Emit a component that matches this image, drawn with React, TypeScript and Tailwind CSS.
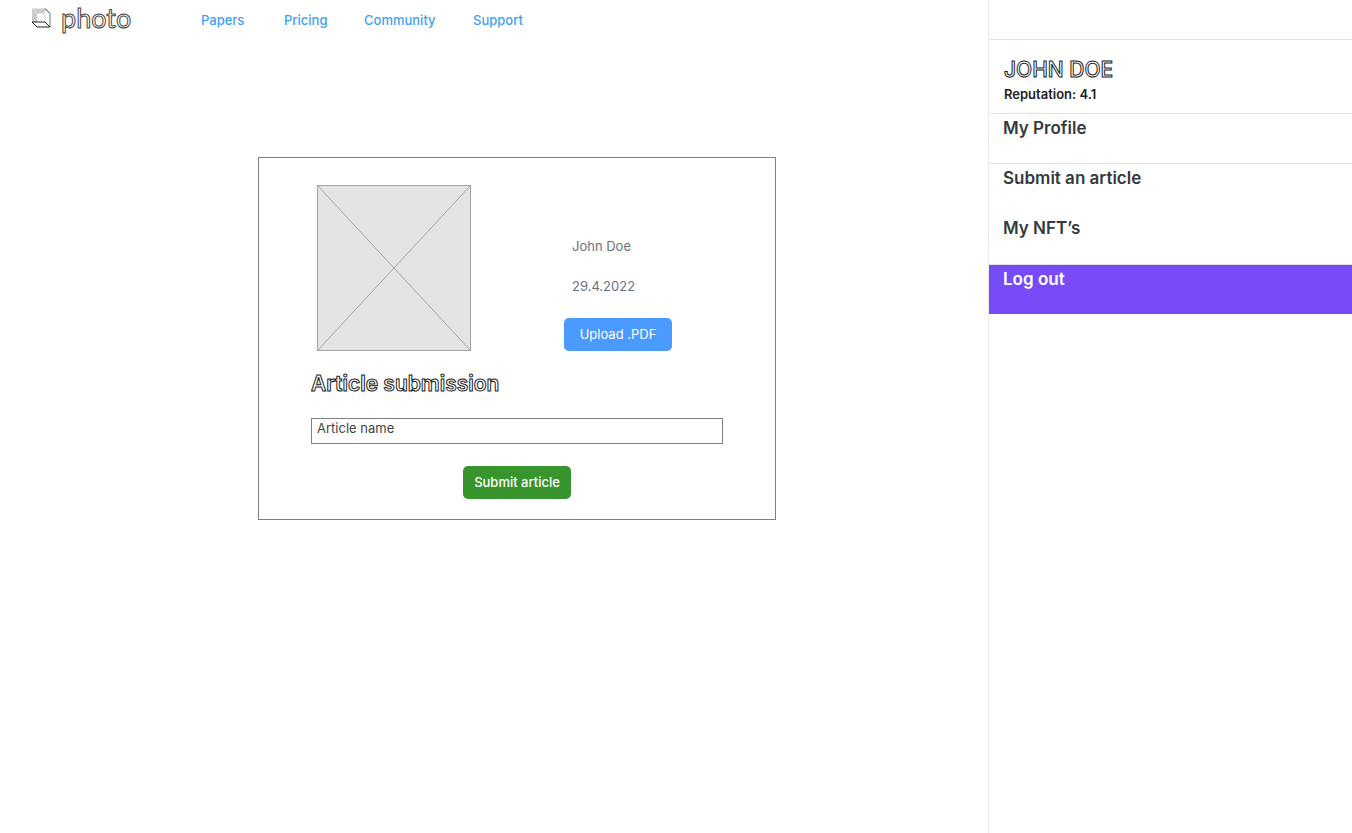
import React from "react";

const navLinks = [
  { label: "Papers", width: "w-[83px]" },
  { label: "Pricing", width: "w-20" },
  { label: "Community", width: "w-[109px]" },
  { label: "Support", width: "w-16" },
];

const menuItems = [
  { label: "My Profile", href: "#profile", style: "h-[50px] border-t border-[#e2e2e2]" },
  { label: "Submit an article", href: "#submit", style: "h-[51px] border-t border-[#e2e2e2]" },
  { label: "My NFT’s", href: "#nfts", style: "h-[51px] border-b border-[#e2e2e2]" },
  { label: "Log out", href: "#logout", style: "h-[49px] bg-[#784bf9] text-white" },
];

function Logo() {
  return (
    <a href="#home" className="flex w-[170px] items-center gap-2.5 pb-1">
      <svg width="20" height="20" viewBox="0 0 20 20" fill="none" aria-hidden="true">
        <path d="M1 0.5H14.5L13.5 5.5H6V14H1Z" fill="#cbcbcb" />
        <path d="M1 0.5L6 5.5" stroke="#e4e4e4" />
        <path d="M14 5.5V14" stroke="#d4d4d4" />
        <path d="M14 0.5L19 5.5" stroke="#222" />
        <path d="M19 5.5V19" stroke="#777" />
        <path d="M1 14H14L19 19H6L1 14Z" stroke="#222" />
      </svg>
      <span className="font-['Lato',sans-serif] text-[27px] leading-8 font-normal text-white [-webkit-text-stroke:1px_#444]">
        photo
      </span>
    </a>
  );
}

function Header() {
  return (
    <header className="flex h-10 items-center pl-[31px]">
      <Logo />
      <nav className="flex text-[13px] leading-5 font-medium text-[#3f9ff5]">
        {navLinks.map((link) => (
          <div key={link.label} className={link.width}>
            <a href={"#" + link.label.toLowerCase()}>{link.label}</a>
          </div>
        ))}
      </nav>
    </header>
  );
}

function ImagePlaceholder() {
  return (
    <svg
      className="block h-[166px] w-[154px] bg-[#e4e4e4]"
      viewBox="0 0 154 166"
      fill="none"
      stroke="#a3a3a3"
      role="img"
      aria-label="Article cover"
    >
      <rect x="0.5" y="0.5" width="153" height="165" />
      <path d="M0.5 0.5L153.5 165.5M153.5 0.5L0.5 165.5" />
    </svg>
  );
}

function SubmissionCard() {
  return (
    <form
      className="w-[518px] border border-[#808080] px-[52px] pt-[27px] pb-5"
      onSubmit={(event) => event.preventDefault()}
    >
      <div className="flex items-end justify-between pr-[51px] pl-1.5">
        <ImagePlaceholder />
        <div className="w-[108px]">
          <p className="pl-2 text-[13px] leading-5 text-[#6b7280]">John Doe</p>
          <p className="mt-5 pl-2 text-[13px] leading-5 text-[#6b7280]">29.4.2022</p>
          <button
            type="button"
            className="mt-[22px] block h-[33px] w-full rounded-[5px] bg-[#4a9aff] text-[13px] text-white"
          >
            Upload .PDF
          </button>
        </div>
      </div>
      <h1 className="mt-[19px] text-[21px] leading-7 font-semibold text-white [-webkit-text-stroke:1px_#222]">
        Article submission
      </h1>
      <input
        type="text"
        aria-label="Article name"
        placeholder="Article name"
        className="mt-5 block h-[26px] w-full border border-[#808080] px-[5px] pb-1.5 text-[13px] text-[#444] outline-none placeholder:text-[#444]"
      />
      <button
        type="submit"
        className="mx-auto mt-[22px] block h-[33px] w-[108px] rounded-[5px] bg-[#38942c] text-[13px] font-medium text-white"
      >
        Submit article
      </button>
    </form>
  );
}

function Sidebar() {
  return (
    <aside className="w-[364px] shrink-0 border-l border-[#ececec] pt-[39px] text-[#343a40]">
      <div className="h-[74px] border-t border-[#e2e2e2] pt-4 pl-[15px]">
        <h2 className="text-[21px] leading-7 font-medium text-white [-webkit-text-stroke:1px_#222]">
          JOHN DOE
        </h2>
        <p className="text-[13px] leading-5 font-semibold text-[#222]">Reputation: 4.1</p>
      </div>
      <nav className="text-[17px] leading-7 font-semibold">
        {menuItems.map((item) => (
          <a key={item.label} href={item.href} className={"block pl-3.5 " + item.style}>
            {item.label}
          </a>
        ))}
      </nav>
    </aside>
  );
}

export default function App() {
  return (
    <div className="flex min-h-screen bg-white font-['Inter',sans-serif]">
      <div className="min-w-0 flex-1">
        <Header />
        <main className="flex justify-center pt-[117px] pl-[46px]">
          <SubmissionCard />
        </main>
      </div>
      <Sidebar />
    </div>
  );
}
